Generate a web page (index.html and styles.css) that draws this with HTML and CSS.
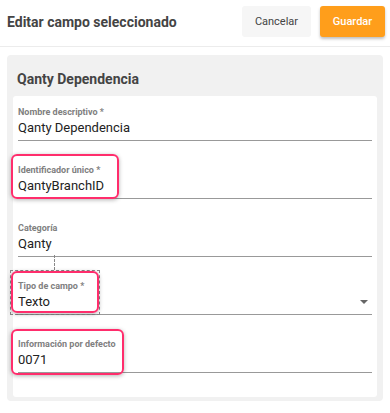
FILE: index.html
```html
<!DOCTYPE html>
<html lang="es">
  <head>
    <meta charset="UTF-8" />
    <meta name="viewport" content="width=device-width, initial-scale=1.0" />
    <title>Editar campo seleccionado</title>
    <link rel="stylesheet" href="styles.css">
  </head>
  <body>
    <div class="header">
      <h1 class="title">Editar campo seleccionado</h1>
      <button class="btn btn-cancel">Cancelar</button>
      <button class="btn btn-save">Guardar</button>
    </div>

    <div class="panel">
      <h2 class="panel-title">Qanty Dependencia</h2>

      <div class="card">
        <div class="field">
          <div class="field-label">Nombre descriptivo *</div>
          <div class="field-value">Qanty Dependencia</div>
        </div>

        <div class="field">
          <div class="field-label">Identificador único *</div>
          <div class="field-value">QantyBranchID</div>
          <div class="mark mark-id"></div>
        </div>

        <div class="field">
          <div class="field-label">Categoría</div>
          <div class="field-value">Qanty</div>
        </div>

        <div class="field">
          <div class="field-label">Tipo de campo *</div>
          <div class="field-value">
            <span>Texto</span>
            <span class="caret"></span>
          </div>
          <!-- selección del editor -->
          <div class="guide"></div>
          <div class="selection"></div>
          <div class="mark mark-type"></div>
        </div>

        <div class="field">
          <div class="field-label">Información por defecto</div>
          <div class="field-value">0071</div>
          <div class="mark mark-default"></div>
        </div>
      </div>
    </div>
  </body>
</html>
```

FILE: styles.css
```css
* {
  margin: 0;
  padding: 0;
  box-sizing: border-box;
}

body {
  font-family: Roboto, "Liberation Sans", Arial, sans-serif;
  background: white;
  color: #333;
}

.header {
  display: flex;
  align-items: center;
  height: 47px;
  padding: 0 5px 3px 7px;
  border-bottom: 1px solid #ececec;
}

.title {
  flex: 1;
  font-size: 14px;
  font-weight: bold;
  color: #444;
}

.btn {
  height: 31px;
  border: none;
  border-radius: 3px;
  font-family: inherit;
  font-size: 11px;
  cursor: pointer;
}

.btn-cancel {
  width: 69px;
  background: #f6f6f6;
  color: #444;
  margin-right: 9px;
}

.btn-save {
  width: 65px;
  background: #ff9e1b;
  color: white;
  font-weight: 500;
  box-shadow: 0 2px 3px rgba(0, 0, 0, 0.25);
}

.panel {
  margin: 8px 7px 0;
  background: #f1f1f1;
  border-radius: 4px;
  padding: 0 6px 4px;
}

.panel-title {
  font-size: 14px;
  font-weight: bold;
  line-height: 16px;
  color: #444;
  padding: 16px 4px 9px;
}

.card {
  background: white;
  border-radius: 3px;
  padding: 0 5px 24px;
}

.field {
  position: relative;
  padding-top: 10px;
  margin-bottom: 13px;
  border-bottom: 1px solid #999;
}

.field:last-child {
  margin-bottom: 0;
}

.field-label {
  font-size: 9px;
  font-weight: bold;
  line-height: 12px;
  color: #808080;
}

.field-value {
  display: flex;
  align-items: center;
  justify-content: space-between;
  margin-top: 1px;
  padding-bottom: 3px;
  font-size: 13px;
  line-height: 18px;
  color: #222;
}

.caret {
  width: 0;
  height: 0;
  margin-right: 4px;
  border-left: 4px solid transparent;
  border-right: 4px solid transparent;
  border-top: 4px solid #666;
}

.mark {
  position: absolute;
  left: -7px;
  border: 2.5px solid #ff2d6c;
  border-radius: 6px;
  box-shadow: 0 1px 4px rgba(0, 0, 0, 0.3);
}

.mark-id {
  top: 0;
  width: 108px;
  height: 45px;
}

.mark-type {
  top: 1px;
  width: 88px;
  height: 42px;
}

.mark-default {
  top: 1px;
  width: 113px;
  height: 46px;
}

.selection {
  position: absolute;
  top: 0;
  left: -8px;
  width: 90px;
  height: 45px;
  border: 1px dashed #888;
}

.guide {
  position: absolute;
  top: -15px;
  left: 36px;
  height: 15px;
  border-left: 1px dashed #888;
}
```
